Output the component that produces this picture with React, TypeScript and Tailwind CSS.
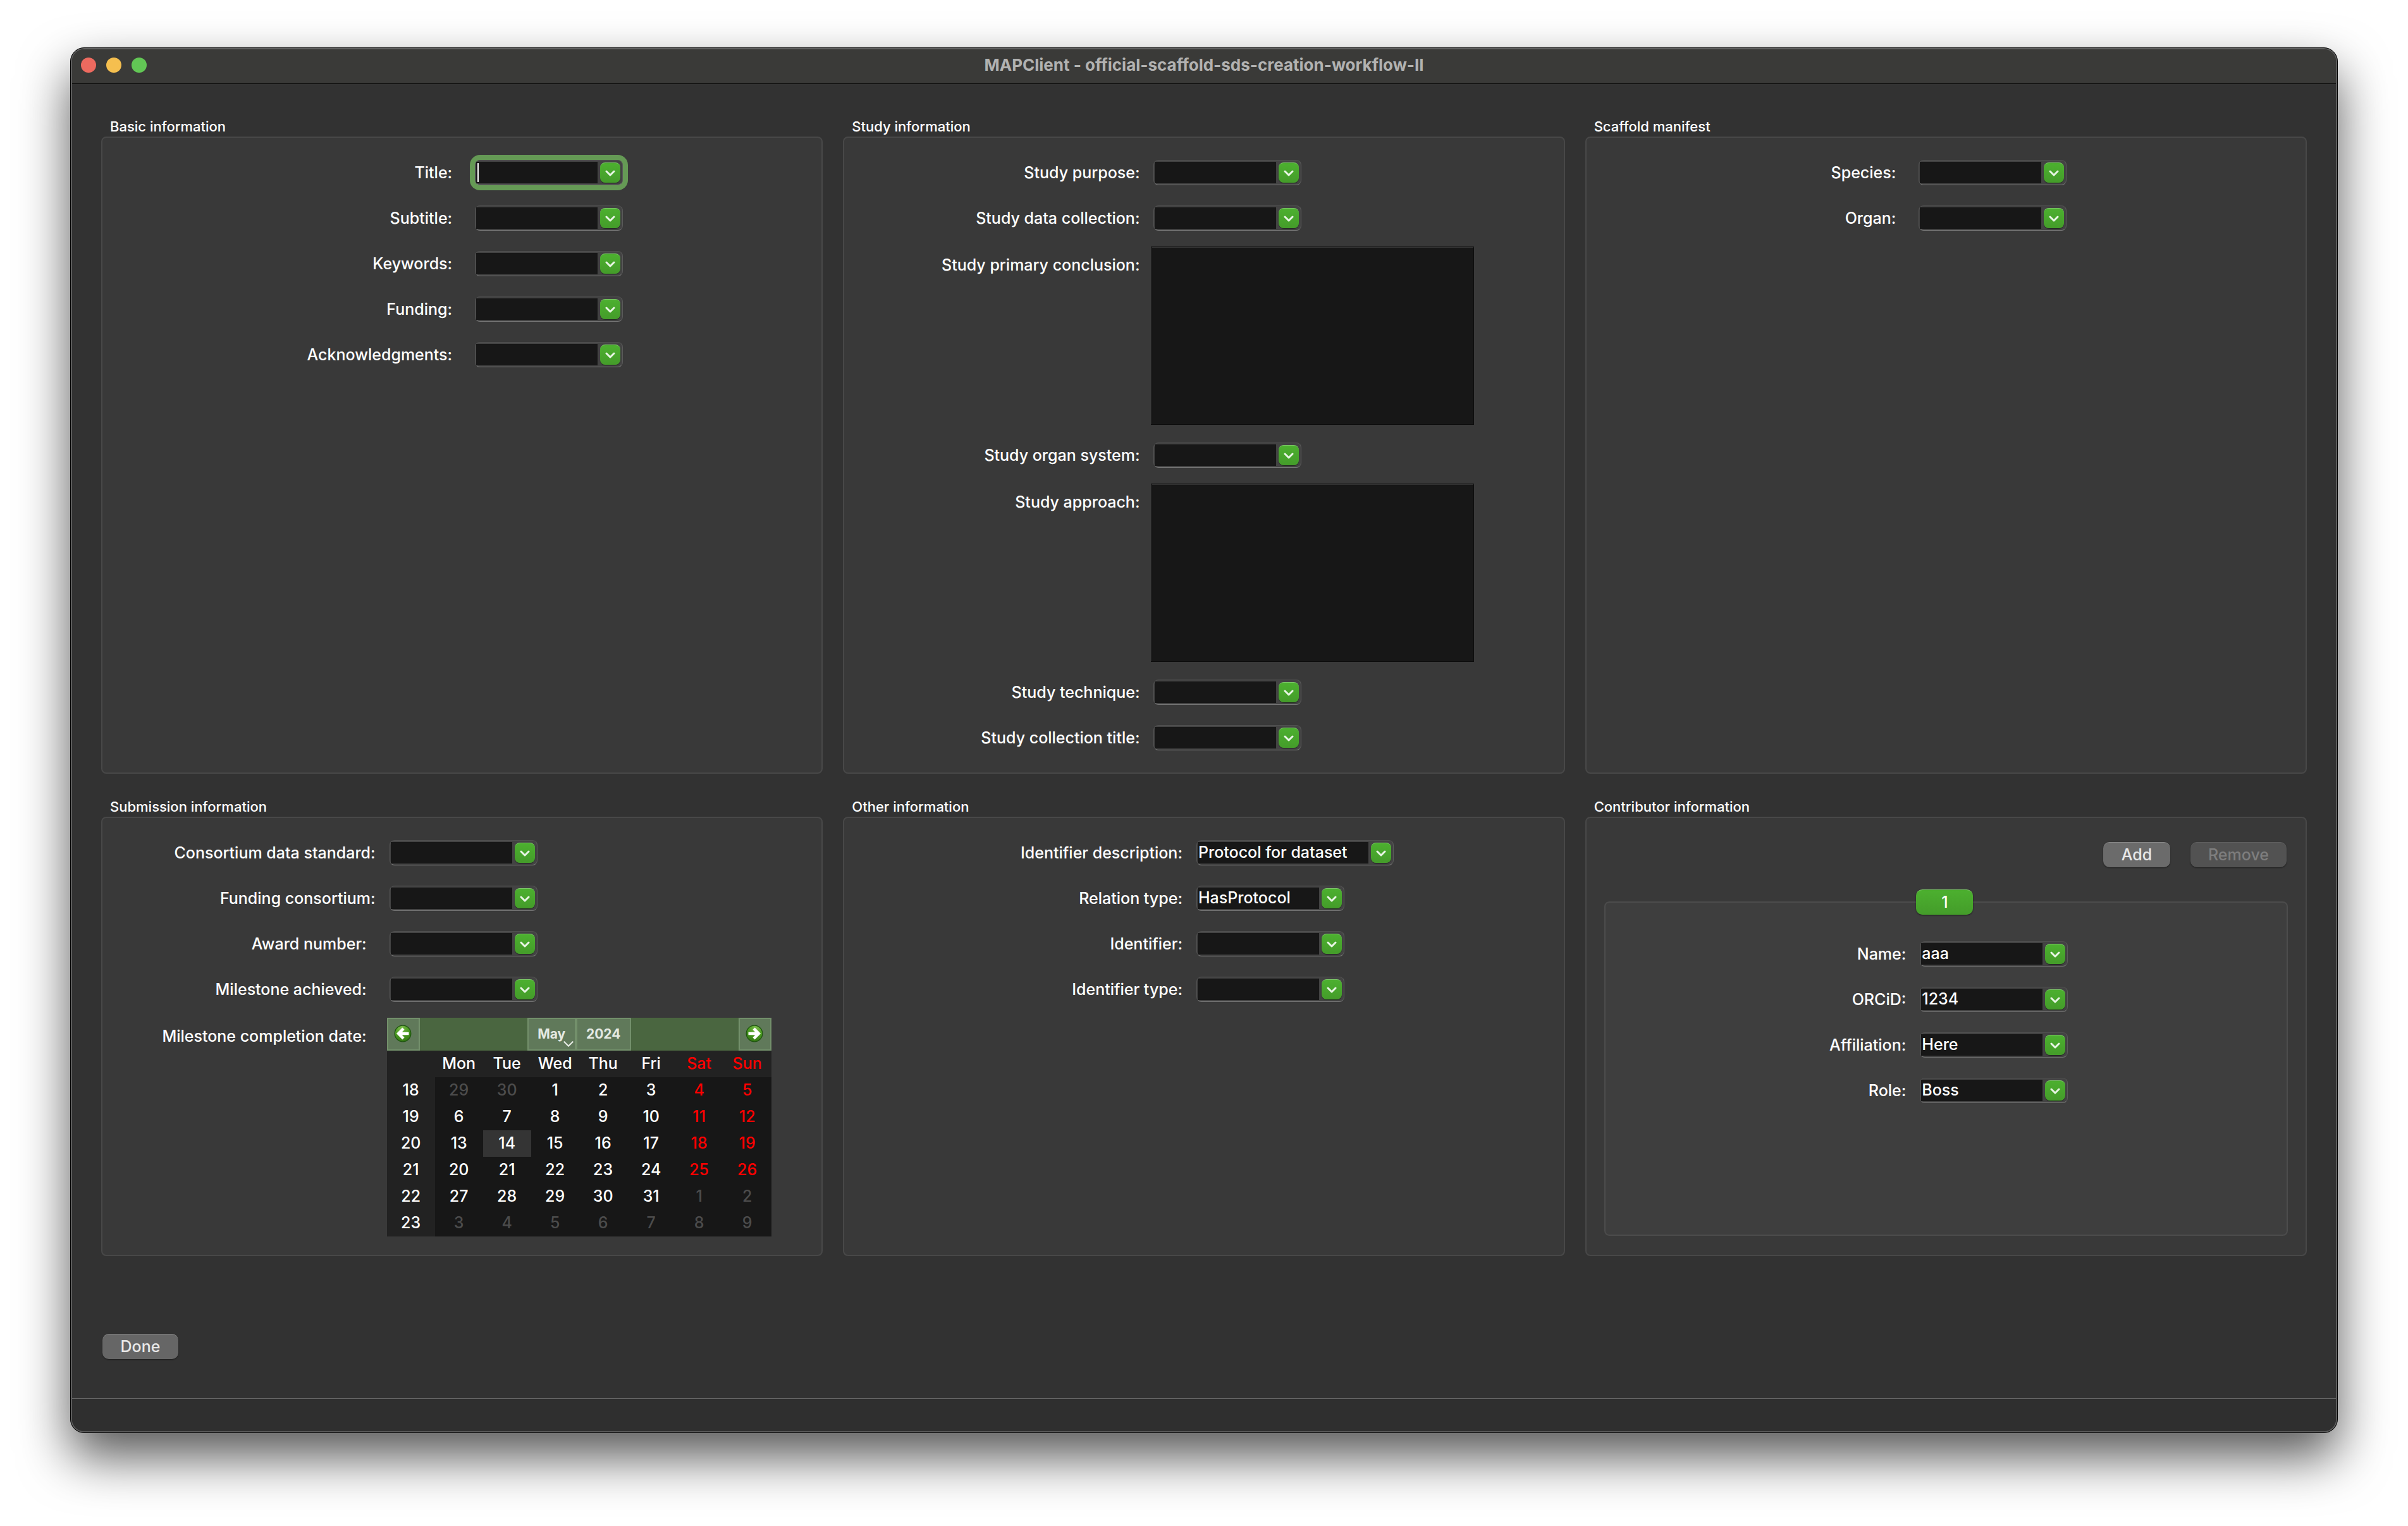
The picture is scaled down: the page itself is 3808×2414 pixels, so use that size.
import { type ReactNode, useId } from "react";

function Chevron({ className, stroke = 3 }: { className?: string; stroke?: number }) {
  return (
    <svg viewBox="0 0 16 10" fill="none" aria-hidden="true" className={className}>
      <path d="M2 2l6 6 6-6" stroke="currentColor" strokeWidth={stroke} strokeLinecap="round" strokeLinejoin="round" />
    </svg>
  );
}

function Combo({ id, value = "", wide = false, focused = false }: { id: string; value?: string; wide?: boolean; focused?: boolean }) {
  return (
    <div
      className={
        "ml-1 flex h-10 items-center rounded-lg border border-t-[#505050] border-r-[#5a5a5a] border-b-[#757575] border-l-[#555555] bg-[#434343] pr-[3px] pl-px " +
        (wide ? "w-[312px] " : "w-[234px] ") +
        (focused ? "ring-8 ring-[#659a55]" : "")
      }
    >
      {focused && <span className="z-10 -mr-1 ml-0.5 h-[30px] w-0.5 bg-white" />}
      <input
        id={id}
        type="text"
        defaultValue={value}
        className="h-[34px] min-w-0 flex-1 bg-[#171717] pr-1 pb-0.5 pl-px text-[25px] text-white outline-none"
      />
      <button
        type="button"
        aria-label="Show options"
        className="ml-1 flex size-8 items-center justify-center rounded-lg border-t border-[#7cc768] bg-linear-to-b from-[#4cb02f] to-[#449c2a] text-[#e8f5e4] shadow-[0_1px_1px_#222]"
      >
        <Chevron className="mt-px h-2.5 w-4" />
      </button>
    </div>
  );
}

function Row({ label, near = false, ...combo }: { label: string; near?: boolean; value?: string; wide?: boolean; focused?: boolean }) {
  const id = useId();
  return (
    <>
      <label htmlFor={id} className={"self-center text-right whitespace-nowrap " + (near ? "pr-[18px]" : "pr-8")}>
        {label}
      </label>
      <div className="flex h-[72px] items-center">
        <Combo id={id} {...combo} />
      </div>
    </>
  );
}

function AreaRow({ label }: { label: string }) {
  const id = useId();
  return (
    <>
      <label htmlFor={id} className="mt-[22px] pr-[18px] text-right whitespace-nowrap">
        {label}
      </label>
      <div className="flex pt-[9px] pb-3">
        <textarea
          id={id}
          className="h-[282px] w-[511px] resize-none border border-[#0c0c0c] bg-[#171717] text-[25px] text-white shadow-[inset_1px_1px_0_#333] outline-none"
        />
      </div>
    </>
  );
}

function Group({ title, children }: { title: string; children: ReactNode }) {
  return (
    <section className="flex min-w-0 flex-col">
      <h2 className="pt-px pl-[14px] text-[22px] leading-[31px] font-medium">{title}</h2>
      <div className="flex-1 rounded-lg border-2 border-[#484848] bg-[#393939]">{children}</div>
    </section>
  );
}

function ArrowBall({ flip = false }: { flip?: boolean }) {
  return (
    <svg viewBox="0 0 32 32" className={flip ? "size-8 -scale-x-100" : "size-8"} aria-hidden="true">
      <defs>
        <radialGradient id={flip ? "ball-next" : "ball-prev"} cx="0.4" cy="0.15" r="0.95">
          <stop offset="0" stopColor="#7cbb4c" />
          <stop offset="0.5" stopColor="#4a9a22" />
          <stop offset="1" stopColor="#2f7010" />
        </radialGradient>
      </defs>
      <circle cx="16" cy="16" r="12.8" fill={flip ? "url(#ball-next)" : "url(#ball-prev)"} stroke="#1f5610" strokeWidth="1.3" />
      <path d="M17 8.200L9.200 16l7.800 7.800M10 16h15.500" fill="none" stroke="#fff" strokeWidth="4.600" />
    </svg>
  );
}

const weekdays = ["Mon", "Tue", "Wed", "Thu", "Fri", "Sat", "Sun"];
const weeks: [number, number[]][] = [
  [18, [29, 30, 1, 2, 3, 4, 5]],
  [19, [6, 7, 8, 9, 10, 11, 12]],
  [20, [13, 14, 15, 16, 17, 18, 19]],
  [21, [20, 21, 22, 23, 24, 25, 26]],
  [22, [27, 28, 29, 30, 31, 1, 2]],
  [23, [3, 4, 5, 6, 7, 8, 9]],
];

function dayClass(week: number, col: number, day: number) {
  const outside = (week === 18 && day > 20) || (week >= 22 && day < 20);
  if (outside) return "text-[#4c4c4c]";
  if (col > 4) return "text-[#ff0000]";
  if (day === 14) return "bg-[#343434]";
  return "";
}

function Calendar() {
  const tool = "flex h-[52px] items-center justify-center border-2 border-[#73906b] bg-[#60795a] text-[#e4e9e2]";
  return (
    <div className="mt-[9px] w-[608px]">
      <div className="flex justify-between bg-[#4a6640] text-[21px] font-bold">
        <button type="button" aria-label="Previous month" className={tool + " w-[52px] pr-0.5 pb-0.5"}>
          <ArrowBall />
        </button>
        <div className="flex">
          <button type="button" className={tool + " relative w-[77px]"}>
            May
            <Chevron stroke={2} className="absolute right-px bottom-[3px] h-[11px] w-[18px]" />
          </button>
          <button type="button" className={tool + " w-[87px]"}>
            2024
          </button>
        </div>
        <button type="button" aria-label="Next month" className={tool + " w-[52px] pr-0.5 pb-0.5"}>
          <ArrowBall flip />
        </button>
      </div>
      <table className="w-full table-fixed border-collapse bg-[#171717] text-center">
        <thead>
          <tr className="h-[42px] bg-[#222222]">
            <td className="p-0" />
            {weekdays.map((d, i) => (
              <th key={d} scope="col" className={"p-0 pb-0.5 font-[450] " + (i > 4 ? "text-[#ff0000]" : "")}>
                {d}
              </th>
            ))}
          </tr>
        </thead>
        <tbody>
          {weeks.map(([week, days]) => (
            <tr key={week} className="h-[42px]">
              <th scope="row" className="bg-[#222222] p-0 pb-0.5 font-[450]">
                {week}
              </th>
              {days.map((day, col) => (
                <td key={col} className={"p-0 pb-0.5 " + dayClass(week, col, day)}>
                  {day}
                </td>
              ))}
            </tr>
          ))}
        </tbody>
      </table>
    </div>
  );
}

const push = "h-10 rounded-[10px] border-t pb-0.5 shadow-[0_1px_2px_#1c1c1c]";

export default function App() {
  return (
    <div className="flex min-h-screen flex-col bg-white px-[111px] pt-[75px] pb-[147px] font-['Inter','Liberation_Sans',sans-serif] text-[25px] leading-[32px] font-[450] text-white">
      <main className="flex flex-1 flex-col overflow-hidden rounded-[22px] border border-black bg-[#323232] shadow-[0_38px_80px_rgba(0,0,0,0.66)]">
        <div className="flex flex-1 flex-col rounded-[21px] border-2 border-[#5c5c5c]">
          <header className="grid h-[54px] grid-cols-[1fr_auto_1fr] items-center rounded-t-[19px] bg-[#3a3a38] pb-1">
            <div className="flex gap-4 pl-[14px]">
              <button type="button" aria-label="Close" className="size-6 rounded-full bg-[#ed6a5f]" />
              <button type="button" aria-label="Minimize" className="size-6 rounded-full bg-[#f5bf4f]" />
              <button type="button" aria-label="Zoom" className="size-6 rounded-full bg-[#62c655]" />
            </div>
            <h1 className="text-[26px] font-bold text-[#b2b2b1]">MAPClient - official-scaffold-sds-creation-workflow-II</h1>
          </header>
          <div className="flex flex-1 flex-col border-t border-black px-[46px] pt-[51px]">
            <div className="grid grid-cols-3 gap-x-8 gap-y-9">
              <Group title="Basic information">
                <div className="grid grid-cols-[262px_238px] justify-center pt-[19px] pl-[9px]">
                  <Row label="Title:" focused />
                  <Row label="Subtitle:" />
                  <Row label="Keywords:" />
                  <Row label="Funding:" />
                  <Row label="Acknowledgments:" />
                </div>
              </Group>
              <Group title="Study information">
                <div className="grid grid-cols-[334px_511px] justify-center pt-[19px] pb-[19px] pl-[10px]">
                  <Row label="Study purpose:" near />
                  <Row label="Study data collection:" near />
                  <AreaRow label="Study primary conclusion:" />
                  <Row label="Study organ system:" near />
                  <AreaRow label="Study approach:" />
                  <Row label="Study technique:" near />
                  <Row label="Study collection title:" near />
                </div>
              </Group>
              <Group title="Scaffold manifest">
                <div className="grid grid-cols-[138px_238px] justify-center pt-[19px] pl-[6px]">
                  <Row label="Species:" />
                  <Row label="Organ:" />
                </div>
              </Group>
              <Group title="Submission information">
                <div className="grid grid-cols-[358px_608px] justify-center pt-[19px] pb-[29px] pl-[12px]">
                  <Row label="Consortium data standard:" near />
                  <Row label="Funding consortium:" near />
                  <Row label="Award number:" />
                  <Row label="Milestone achieved:" />
                  <div className="mt-[22px] pr-8 text-right whitespace-nowrap">Milestone completion date:</div>
                  <Calendar />
                </div>
              </Group>
              <Group title="Other information">
                <div className="grid grid-cols-[276px_316px] justify-center pt-[19px] pl-[8px]">
                  <Row label="Identifier description:" near value="Protocol for dataset" wide />
                  <Row label="Relation type:" near value="HasProtocol" />
                  <Row label="Identifier:" near />
                  <Row label="Identifier type:" near />
                </div>
              </Group>
              <Group title="Contributor information">
                <div className="flex h-full flex-col px-7 pt-[38px] pb-[30px]">
                  <div className="flex justify-end gap-8 pr-0.5">
                    <button type="button" className={push + " w-[106px] border-[#8a8a8a] bg-[#6b6b6b] text-[#e8e8e8]"}>
                      Add
                    </button>
                    <button type="button" disabled className={push + " w-[152px] border-[#606060] bg-[#525252] text-[#7e7e7e]"}>
                      Remove
                    </button>
                  </div>
                  <div role="tablist" className="z-10 mt-[35px] flex justify-center pr-1">
                    <button
                      type="button"
                      role="tab"
                      aria-selected="true"
                      className={push + " w-[90px] border-[#7cc768] bg-linear-to-b from-[#4cb02f] to-[#449c2a]"}
                    >
                      1
                    </button>
                  </div>
                  <div role="tabpanel" className="-mt-[21px] flex-1 rounded-lg border-2 border-[#4c4c4c] bg-[#3e3e3e]">
                    <div className="grid grid-cols-[140px_238px] justify-center pt-[45px] pl-[8px]">
                      <Row label="Name:" near value="aaa" />
                      <Row label="ORCiD:" near value="1234" />
                      <Row label="Affiliation:" near value="Here" />
                      <Row label="Role:" near value="Boss" />
                    </div>
                  </div>
                </div>
              </Group>
            </div>
            <div className="mt-[123px] pl-0.5">
              <button type="button" className={push + " w-[120px] border-[#858585] bg-[#666666] text-[#e8e8e8]"}>
                Done
              </button>
            </div>
          </div>
          <footer className="h-[52px] rounded-b-[19px] border-t border-[#6a6a6a] bg-[#2f2f2f]" />
        </div>
      </main>
    </div>
  );
}
